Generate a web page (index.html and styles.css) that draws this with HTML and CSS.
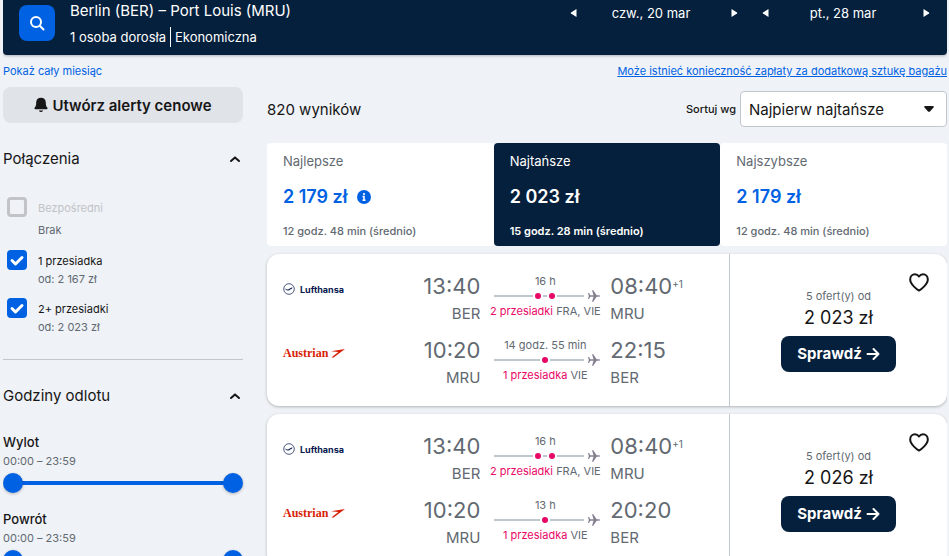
FILE: index.html
```html
<!DOCTYPE html>
<html lang="pl">
<head>
<meta charset="utf-8">
<meta name="viewport" content="width=device-width, initial-scale=1">
<title>Berlin – Port Louis</title>
<link rel="stylesheet" href="styles.css">
</head>
<body>
<svg class="sprite" aria-hidden="true">
  <symbol id="plane" viewBox="0 0 12 12"><path d="M0 3h1l1.400 2.300h3.100L4 0.200h1.200l3.500 5.100h2.300q1 .2 1 .7t-1 .7H8.700L5.200 11.800H4l1.500-5.100H2.400L1 9H0l.8-3z"/></symbol>
  <symbol id="left" viewBox="0 0 8 10"><path d="M6.500 1v8L1 5.600q-.6-.6 0-1.200z"/></symbol>
  <symbol id="right" viewBox="0 0 8 10"><path d="M1.500 1v8L7 5.600q.6-.6 0-1.200z"/></symbol>
  <symbol id="up" viewBox="0 0 12 8"><path d="M2 6 6 2.400 10 6" fill="none" stroke="currentColor" stroke-width="2" stroke-linecap="round" stroke-linejoin="round"/></symbol>
  <symbol id="heart" viewBox="0 0 20 19"><path d="M10 17.600C8.500 16.900 1.200 11.500 1.200 6.400 1.200 3.400 3.300 1.200 6 1.200c1.700 0 3.100.9 4 2.300.9-1.400 2.300-2.300 4-2.300 2.700 0 4.800 2.200 4.800 5.200 0 5.100-7.300 10.500-8.800 11.200z" fill="none" stroke="currentColor" stroke-width="2" stroke-linejoin="round"/></symbol>
  <symbol id="arrow" viewBox="0 0 14 14"><path d="M1.500 7h11M7.500 2l5 5-5 5" fill="none" stroke="currentColor" stroke-width="2" stroke-linecap="round" stroke-linejoin="round"/></symbol>
  <symbol id="crane" viewBox="0 0 12 12"><circle cx="6" cy="6" r="5.300" fill="none" stroke="currentColor" stroke-width=".7"/><path d="M1 5.500c2 .2 2.600 1.200 3.800 1.100C6.200 6.400 7 4.700 10 4.300L8.900 5l1 .1-1.600.5.8.3-1.700.4C6.500 7.600 5 7.900 3.700 7.200 2.700 6.600 2.200 5.900 1 5.500z"/></symbol>
  <symbol id="swoosh" viewBox="0 0 14 9"><path d="M0 2.200 14 0 2.600 8.600H.4L7.400 2.900z"/></symbol>
  <symbol id="route2" viewBox="0 0 92 8"><path class="rail" d="M0 4h39M49 4h4M63 4h27"/><circle class="dot" cx="44" cy="4" r="3"/><circle class="dot" cx="58" cy="4" r="3"/></symbol>
  <symbol id="route1" viewBox="0 0 92 8"><path class="rail" d="M0 4h46M56 4h34"/><circle class="dot" cx="51" cy="4" r="3"/></symbol>
</svg>

<header class="search">
  <button class="search-btn" type="button" aria-label="Szukaj"><svg width="16" height="16" viewBox="0 0 16 16"><circle cx="7" cy="7" r="5"/><path d="m11 11 3.500 3.500"/></svg></button>
  <div class="trip">
    <h1>Berlin (BER) – Port Louis (MRU)</h1>
    <p><span>1 osoba dorosła</span><span>Ekonomiczna</span></p>
  </div>
  <div class="dates">
    <div class="date"><button type="button" aria-label="Wcześniej"><svg><use href="#left"/></svg></button><span>czw., 20 mar</span><button type="button" aria-label="Później"><svg><use href="#right"/></svg></button></div>
    <div class="date"><button type="button" aria-label="Wcześniej"><svg><use href="#left"/></svg></button><span>pt., 28 mar</span><button type="button" aria-label="Później"><svg><use href="#right"/></svg></button></div>
  </div>
</header>

<div class="links"><a href="#">Pokaż cały miesiąc</a><a class="bags" href="#">Może istnieć konieczność zapłaty za dodatkową sztukę bagażu</a></div>

<div class="page">
  <aside>
    <button class="alert" type="button"><svg width="14" height="16" viewBox="0 0 14 16"><path d="M7 .8c-3 0-4.800 2-4.800 4.800 0 3-.4 3.800-1.600 5.200-.4.700-.1 1.400.7 1.400h11.400c.8 0 1.100-.7.7-1.400-1.200-1.400-1.600-2.200-1.600-5.200C11.800 2.800 10 .8 7 .8zM4.900 13.400h4.200Q8.500 15 7 15t-2.100-1.600z"/></svg>Utwórz alerty cenowe</button>

    <section class="stops">
      <h2>Połączenia<svg><use href="#up"/></svg></h2>
      <div class="option off"><input type="checkbox" id="s0" disabled><label for="s0">Bezpośredni</label><small>Brak</small></div>
      <div class="option"><input type="checkbox" id="s1" checked><label for="s1">1 przesiadka</label><small>od: 2 167 zł</small></div>
      <div class="option"><input type="checkbox" id="s2" checked><label for="s2">2+ przesiadki</label><small>od: 2 023 zł</small></div>
    </section>

    <section class="hours">
      <h2>Godziny odlotu<svg><use href="#up"/></svg></h2>
      <div class="slot">
        <h3>Wylot</h3><p>00:00 – 23:59</p>
        <div class="range"><input type="range" min="0" max="1439" value="0" aria-label="Wylot od"><input type="range" min="0" max="1439" value="1439" aria-label="Wylot do"></div>
      </div>
      <div class="slot">
        <h3>Powrót</h3><p>00:00 – 23:59</p>
        <div class="range"><input type="range" min="0" max="1439" value="0" aria-label="Powrót od"><input type="range" min="0" max="1439" value="1439" aria-label="Powrót do"></div>
      </div>
    </section>
  </aside>

  <main>
    <div class="bar">
      <span class="count">820 wyników</span>
      <label for="sort">Sortuj wg</label>
      <div class="select"><select id="sort"><option>Najpierw najtańsze</option></select><svg width="10" height="6" viewBox="0 0 10 6"><path d="M1 0h8q1.200.4.500 1.500L6 5.400q-1 .8-2 0L.5 1.500Q-.2.400 1 0z"/></svg></div>
    </div>

    <div class="tabs">
      <button type="button"><span>Najlepsze</span><strong>2 179 zł<svg width="14" height="14" viewBox="0 0 14 14"><circle cx="7" cy="7" r="7"/><path d="M7 3v2M5.500 6.500H7v4M5.500 10.300h3" fill="none" stroke="#fff" stroke-width="1.600"/></svg></strong><em>12 godz. 48 min (średnio)</em></button>
      <button type="button" class="active"><span>Najtańsze</span><strong>2 023 zł</strong><em>15 godz. 28 min (średnio)</em></button>
      <button type="button"><span>Najszybsze</span><strong>2 179 zł</strong><em>12 godz. 48 min (średnio)</em></button>
    </div>

    <article class="card">
      <div class="legs">
        <div class="leg">
          <div class="from"><span class="logo lh"><svg><use href="#crane"/></svg>Lufthansa</span><div class="end"><b>13:40</b><span>BER</span></div></div>
          <div class="mid"><span>16 h</span><div class="route"><svg class="line"><use href="#route2"/></svg><svg class="plane"><use href="#plane"/></svg></div><span><i>2 przesiadki</i> FRA, VIE</span></div>
          <div class="to"><b>08:40<sup>+1</sup></b><span>MRU</span></div>
        </div>
        <div class="leg">
          <div class="from"><span class="logo os">Austrian<svg><use href="#swoosh"/></svg></span><div class="end"><b>10:20</b><span>MRU</span></div></div>
          <div class="mid"><span>14 godz. 55 min</span><div class="route"><svg class="line"><use href="#route1"/></svg><svg class="plane"><use href="#plane"/></svg></div><span><i>1 przesiadka</i> VIE</span></div>
          <div class="to"><b>22:15</b><span>BER</span></div>
        </div>
      </div>
      <div class="offer">
        <button class="fav" type="button" aria-label="Zapisz"><svg><use href="#heart"/></svg></button>
        <span>5 ofert(y) od</span><strong>2 023 zł</strong>
        <button class="go" type="button">Sprawdź<svg><use href="#arrow"/></svg></button>
      </div>
    </article>

    <article class="card">
      <div class="legs">
        <div class="leg">
          <div class="from"><span class="logo lh"><svg><use href="#crane"/></svg>Lufthansa</span><div class="end"><b>13:40</b><span>BER</span></div></div>
          <div class="mid"><span>16 h</span><div class="route"><svg class="line"><use href="#route2"/></svg><svg class="plane"><use href="#plane"/></svg></div><span><i>2 przesiadki</i> FRA, VIE</span></div>
          <div class="to"><b>08:40<sup>+1</sup></b><span>MRU</span></div>
        </div>
        <div class="leg">
          <div class="from"><span class="logo os">Austrian<svg><use href="#swoosh"/></svg></span><div class="end"><b>10:20</b><span>MRU</span></div></div>
          <div class="mid"><span>13 h</span><div class="route"><svg class="line"><use href="#route1"/></svg><svg class="plane"><use href="#plane"/></svg></div><span><i>1 przesiadka</i> VIE</span></div>
          <div class="to"><b>20:20</b><span>BER</span></div>
        </div>
      </div>
      <div class="offer">
        <button class="fav" type="button" aria-label="Zapisz"><svg><use href="#heart"/></svg></button>
        <span>5 ofert(y) od</span><strong>2 026 zł</strong>
        <button class="go" type="button">Sprawdź<svg><use href="#arrow"/></svg></button>
      </div>
    </article>
  </main>
</div>
</body>
</html>
```
FILE: styles.css
```css
* { box-sizing: border-box; }
html { overflow: hidden; }
body {
  margin: 0 2px 0 3px;
  background: #eff2f7;
  color: #161616;
  font-family: Inter, "Liberation Sans", sans-serif;
}
h1, h2, h3, p { margin: 0; font-weight: 400; }
button { border: 0; padding: 0; background: none; color: inherit; font: inherit; cursor: pointer; }
svg { display: block; flex: none; fill: currentColor; }
i, em { font-style: normal; }
.sprite { position: absolute; width: 0; height: 0; }

/* Search summary */
.search {
  display: flex;
  align-items: flex-start;
  padding: 0 17px 8px 16px;
  border-radius: 0 0 4px 4px;
  background: #05203c;
  color: #fff;
  box-shadow: 0 1px 3px rgba(37, 32, 31, .3);
}
.search-btn {
  display: flex;
  align-items: center;
  justify-content: center;
  width: 36px;
  height: 36px;
  margin: 5px 15px 0 0;
  border-radius: 8px;
  background: #0062e3;
}
.search-btn svg { fill: none; stroke: #fff; stroke-width: 2; stroke-linecap: round; }
.trip { flex: 1; }
.trip h1 { font-size: 15px; line-height: 22px; }
.trip p { display: flex; margin-top: 5px; font-size: 13px; line-height: 20px; }
.trip span + span { margin-left: 4px; padding-left: 4px; border-left: 1px solid #fff; }
.dates { display: flex; gap: 24px; padding-top: 3px; }
.date { display: flex; align-items: center; justify-content: space-between; width: 168px; font-size: 13px; line-height: 20px; }
.date span { padding-right: 6px; }
.date svg { width: 8px; height: 10px; }

.links { display: flex; justify-content: space-between; padding: 8px 0; font-size: 11px; line-height: 16px; }
.links a { color: #0062e3; text-decoration: none; }
.links .bags { text-decoration: underline; }

.page { display: grid; grid-template-columns: 240px 1fr; gap: 24px; }

/* Filters */
.alert {
  display: flex;
  align-items: center;
  justify-content: center;
  gap: 4px;
  width: 100%;
  height: 36px;
  border-radius: 8px;
  background: #e0e3e8;
  font-size: 15px;
  font-weight: 600;
}
aside h2 { display: flex; align-items: center; justify-content: space-between; font-size: 15px; line-height: 24px; }
aside h2 svg { width: 12px; height: 8px; margin-right: 2px; }
.stops { padding: 24px 0 15px; border-bottom: 1px solid #c1c7cf; }
.stops h2 { margin-bottom: 24px; }
.option { display: grid; grid-template-columns: 20px 1fr; column-gap: 11px; padding: 2px 4px 8px; font-size: 11px; }
.option input {
  appearance: none;
  width: 20px;
  height: 20px;
  margin: 0;
  border-radius: 4px;
  background: #0062e3 url("data:image/svg+xml,%3Csvg xmlns='http://www.w3.org/2000/svg' viewBox='0 0 20 20'%3E%3Cpath d='M5 10.500l3.500 3.500L15 7.500' fill='none' stroke='white' stroke-width='3' stroke-linecap='round' stroke-linejoin='round'/%3E%3C/svg%3E");
}
.option label { padding-top: 2px; line-height: 18px; }
.option small { grid-column: 2; color: #626971; font-size: 11px; line-height: 18px; }
.option.off { padding-bottom: 9px; }
.option.off input { border: 3px solid #c1c3c7; background: none; }
.option.off label { color: #c1c3c7; }
.option.off small { padding-top: 4px; }
.hours h2 { margin: 24px 0; }
.slot { margin-bottom: 16px; }
.slot h3 { font-size: 13px; font-weight: 500; line-height: 20px; }
.slot p { color: #626971; font-size: 11px; line-height: 18px; }
.range {
  display: grid;
  height: 20px;
  margin-top: 3px;
  background: linear-gradient(#0062e3, #0062e3) center / 90% 4px no-repeat;
}
.range input {
  grid-area: 1 / 1;
  appearance: none;
  width: 100%;
  height: 20px;
  margin: 0;
  background: none;
  pointer-events: none;
}
.range input::-webkit-slider-thumb {
  appearance: none;
  width: 20px;
  height: 20px;
  border-radius: 50%;
  background: #0062e3;
  box-shadow: 0 1px 3px rgba(37, 32, 31, .3);
  pointer-events: auto;
}

/* Results */
.bar { display: flex; align-items: center; gap: 4px; padding: 4px 0 16px; }
.count { flex: 1; font-size: 15px; }
.bar label { font-size: 11px; font-weight: 500; }
.select { display: grid; align-items: center; width: 207px; }
.select select, .select svg { grid-area: 1 / 1; }
.select select {
  appearance: none;
  height: 36px;
  padding: 0 32px 0 8px;
  border: 1px solid #c1c7cf;
  border-radius: 4px;
  background: #fff;
  color: #161616;
  font: 15px Inter, "Liberation Sans", sans-serif;
}
.select svg { justify-self: end; margin-right: 13px; pointer-events: none; }

.tabs { display: grid; grid-template-columns: repeat(3, 1fr); margin-bottom: 8px; }
.tabs button {
  display: flex;
  flex-direction: column;
  padding: 8px 16px 7px;
  border-radius: 4px;
  background: #fff;
  color: #626971;
  text-align: left;
}
.tabs span { font-size: 13px; line-height: 20px; }
.tabs strong { display: flex; align-items: center; gap: 9px; margin: 12px 0; color: #0062e3; font-size: 18px; font-weight: 600; line-height: 28px; }
.tabs em { font-size: 11px; font-weight: 500; line-height: 16px; }
.tabs .active { background: #05203c; color: #fff; }
.tabs .active strong { color: #fff; }
.tabs .active em { font-weight: 600; }

.card {
  display: grid;
  grid-template-columns: 1fr 218px;
  margin-bottom: 8px;
  border-radius: 12px;
  background: #fff;
  color: #626971;
  box-shadow: 0 1px 3px rgba(37, 32, 31, .3);
}
.legs { display: grid; gap: 8px; padding: 16px 20px 16px 16px; }
.leg { display: grid; grid-template-columns: 2fr 110px 1fr; column-gap: 10px; white-space: nowrap; }
.from { display: flex; justify-content: space-between; }
.end { text-align: right; }
.leg b { display: block; font-size: 22px; font-weight: 400; line-height: 32px; }
.end span, .to span { display: block; font-size: 15px; line-height: 24px; }
.leg sup { font-size: 10px; line-height: 0; vertical-align: 6px; }
.logo { display: flex; align-items: center; height: 38px; }
.lh { gap: 5px; color: #05164d; font-size: 9px; font-weight: 700; }
.lh svg { width: 12px; height: 12px; }
.os { gap: 3px; color: #d81e05; font-family: "Liberation Serif", serif; font-size: 12px; font-weight: 700; }
.os svg { width: 14px; height: 9px; }
.mid { display: flex; flex-direction: column; align-items: center; justify-content: center; padding-bottom: 4px; font-size: 11px; line-height: 16px; }
.mid i { color: #e70866; }
.route { display: flex; align-items: center; justify-content: space-between; align-self: stretch; height: 14px; padding-left: 4px; }
.line { width: 92px; height: 8px; }
.plane { width: 12px; height: 12px; color: #868091; }
.rail { fill: none; stroke: #c1c7cf; stroke-width: 2; }
.dot { fill: #e70866; }

.offer {
  position: relative;
  display: flex;
  flex-direction: column;
  align-items: center;
  justify-content: center;
  border-left: 1px solid #c1c7cf;
  font-size: 11px;
  line-height: 16px;
}
.offer strong { color: #161616; font-size: 18px; font-weight: 400; line-height: 28px; }
.go {
  display: flex;
  align-items: center;
  gap: 4px;
  height: 36px;
  margin-top: 4px;
  padding: 0 16px;
  border-radius: 8px;
  background: #05203c;
  color: #fff;
  font-size: 15px;
  font-weight: 700;
}
.go svg { width: 14px; height: 14px; }
.fav { position: absolute; top: 19px; right: 18px; color: #161616; }
.fav svg { width: 20px; height: 19px; }
```
